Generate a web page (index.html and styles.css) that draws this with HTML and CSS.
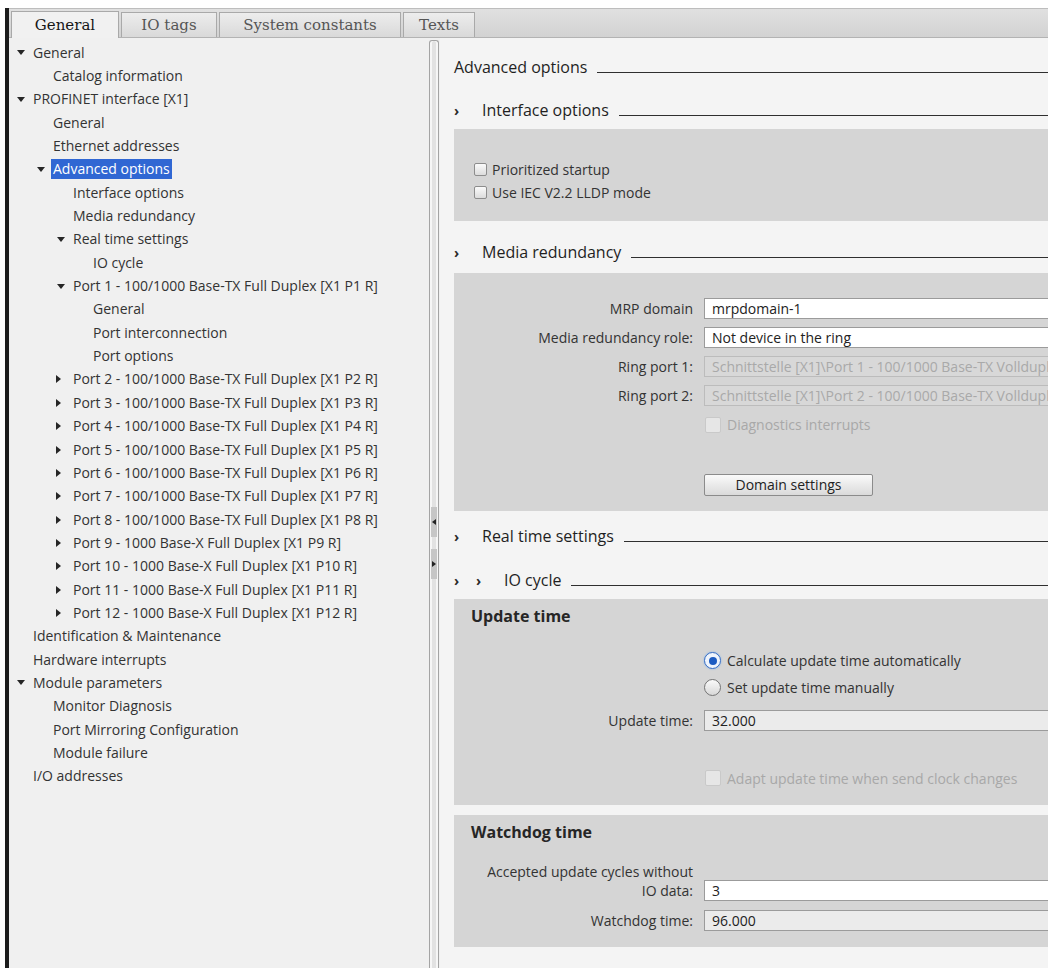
FILE: index.html
```html
<!DOCTYPE html>
<html lang="en">
<head>
    <meta charset="UTF-8">
    <title>PROFINET interface - Properties</title>
    <link rel="stylesheet" href="styles.css">
</head>
<body>
    <div class="window">
        <div class="tabs">
            <div class="tab active" style="width: 108px">General</div>
            <div class="tab" style="width: 96px">IO tags</div>
            <div class="tab" style="width: 182px">System constants</div>
            <div class="tab" style="width: 72px">Texts</div>
        </div>

        <div class="main">
            <div class="tree">
                <ul>
                    <li><div class="row"><i class="tw down"></i><span class="txt">General</span></div>
                        <ul>
                            <li><div class="row"><i class="tw"></i><span class="txt">Catalog information</span></div></li>
                        </ul>
                    </li>
                    <li><div class="row"><i class="tw down"></i><span class="txt">PROFINET interface [X1]</span></div>
                        <ul>
                            <li><div class="row"><i class="tw"></i><span class="txt">General</span></div></li>
                            <li><div class="row"><i class="tw"></i><span class="txt">Ethernet addresses</span></div></li>
                            <li><div class="row sel"><i class="tw down"></i><span class="txt">Advanced options</span></div>
                                <ul>
                                    <li><div class="row"><i class="tw"></i><span class="txt">Interface options</span></div></li>
                                    <li><div class="row"><i class="tw"></i><span class="txt">Media redundancy</span></div></li>
                                    <li><div class="row"><i class="tw down"></i><span class="txt">Real time settings</span></div>
                                        <ul>
                                            <li><div class="row"><i class="tw"></i><span class="txt">IO cycle</span></div></li>
                                        </ul>
                                    </li>
                                    <li><div class="row"><i class="tw down"></i><span class="txt">Port 1 - 100/1000 Base-TX Full Duplex [X1 P1 R]</span></div>
                                        <ul>
                                            <li><div class="row"><i class="tw"></i><span class="txt">General</span></div></li>
                                            <li><div class="row"><i class="tw"></i><span class="txt">Port interconnection</span></div></li>
                                            <li><div class="row"><i class="tw"></i><span class="txt">Port options</span></div></li>
                                        </ul>
                                    </li>
                                    <li><div class="row"><i class="tw right"></i><span class="txt">Port 2 - 100/1000 Base-TX Full Duplex [X1 P2 R]</span></div></li>
                                    <li><div class="row"><i class="tw right"></i><span class="txt">Port 3 - 100/1000 Base-TX Full Duplex [X1 P3 R]</span></div></li>
                                    <li><div class="row"><i class="tw right"></i><span class="txt">Port 4 - 100/1000 Base-TX Full Duplex [X1 P4 R]</span></div></li>
                                    <li><div class="row"><i class="tw right"></i><span class="txt">Port 5 - 100/1000 Base-TX Full Duplex [X1 P5 R]</span></div></li>
                                    <li><div class="row"><i class="tw right"></i><span class="txt">Port 6 - 100/1000 Base-TX Full Duplex [X1 P6 R]</span></div></li>
                                    <li><div class="row"><i class="tw right"></i><span class="txt">Port 7 - 100/1000 Base-TX Full Duplex [X1 P7 R]</span></div></li>
                                    <li><div class="row"><i class="tw right"></i><span class="txt">Port 8 - 100/1000 Base-TX Full Duplex [X1 P8 R]</span></div></li>
                                    <li><div class="row"><i class="tw right"></i><span class="txt">Port 9 - 1000 Base-X Full Duplex [X1 P9 R]</span></div></li>
                                    <li><div class="row"><i class="tw right"></i><span class="txt">Port 10 - 1000 Base-X Full Duplex [X1 P10 R]</span></div></li>
                                    <li><div class="row"><i class="tw right"></i><span class="txt">Port 11 - 1000 Base-X Full Duplex [X1 P11 R]</span></div></li>
                                    <li><div class="row"><i class="tw right"></i><span class="txt">Port 12 - 1000 Base-X Full Duplex [X1 P12 R]</span></div></li>
                                </ul>
                            </li>
                        </ul>
                    </li>
                    <li><div class="row"><i class="tw"></i><span class="txt">Identification &amp; Maintenance</span></div></li>
                    <li><div class="row"><i class="tw"></i><span class="txt">Hardware interrupts</span></div></li>
                    <li><div class="row"><i class="tw down"></i><span class="txt">Module parameters</span></div>
                        <ul>
                            <li><div class="row"><i class="tw"></i><span class="txt">Monitor Diagnosis</span></div></li>
                            <li><div class="row"><i class="tw"></i><span class="txt">Port Mirroring Configuration</span></div></li>
                            <li><div class="row"><i class="tw"></i><span class="txt">Module failure</span></div></li>
                        </ul>
                    </li>
                    <li><div class="row"><i class="tw"></i><span class="txt">I/O addresses</span></div></li>
                </ul>
            </div>

            <div class="splitter">
                <div class="bar">
                    <div class="grip"><i class="arrow-left"></i></div>
                    <div class="grip"><i class="arrow-right"></i></div>
                </div>
            </div>

            <div class="content">
                <div class="title first"><span class="title-text">Advanced options</span><i class="rule"></i></div>

                <div class="title t-iface"><span class="chev">›</span><span class="title-text">Interface options</span><i class="rule"></i></div>
                <div class="box box-iface">
                    <label class="check"><i class="cb"></i>Prioritized startup</label>
                    <label class="check"><i class="cb"></i>Use IEC V2.2 LLDP mode</label>
                </div>

                <div class="title t-media"><span class="chev">›</span><span class="title-text">Media redundancy</span><i class="rule"></i></div>
                <div class="box box-media">
                    <div class="form">
                        <span class="lbl">MRP domain</span>
                        <div class="field">mrpdomain-1</div>
                        <span class="lbl">Media redundancy role:</span>
                        <div class="field">Not device in the ring</div>
                        <span class="lbl">Ring port 1:</span>
                        <div class="field disabled">Schnittstelle [X1]\Port 1 - 100/1000 Base-TX Vollduplex [X1 P1 R]</div>
                        <span class="lbl">Ring port 2:</span>
                        <div class="field disabled">Schnittstelle [X1]\Port 2 - 100/1000 Base-TX Vollduplex [X1 P2 R]</div>
                        <span></span>
                        <label class="check off diag"><i class="cb"></i>Diagnostics interrupts</label>
                        <span></span>
                        <div class="btn">Domain settings</div>
                    </div>
                </div>

                <div class="title t-rt"><span class="chev">›</span><span class="title-text">Real time settings</span><i class="rule"></i></div>

                <div class="title t-io"><span class="chev">›</span><span class="chev">›</span><span class="title-text">IO cycle</span><i class="rule"></i></div>
                <div class="box box-update">
                    <div class="box-head">Update time</div>
                    <div class="form">
                        <span></span>
                        <label class="radio r-first"><i class="rb on"></i>Calculate update time automatically</label>
                        <span></span>
                        <label class="radio"><i class="rb"></i>Set update time manually</label>
                        <span class="lbl f-time">Update time:</span>
                        <div class="field ro f-time">32.000</div>
                        <span></span>
                        <label class="check off adapt"><i class="cb"></i>Adapt update time when send clock changes</label>
                    </div>
                </div>

                <div class="box box-watchdog">
                    <div class="box-head">Watchdog time</div>
                    <div class="form">
                        <span class="lbl two">Accepted update cycles without<br>IO data:</span>
                        <div class="field f-cycles">3</div>
                        <span class="lbl">Watchdog time:</span>
                        <div class="field ro">96.000</div>
                    </div>
                </div>
            </div>
        </div>
    </div>
</body>
</html>
```

FILE: styles.css
```css
* {
    box-sizing: border-box;
}

body {
    margin: 0;
    width: 1048px;
    height: 968px;
    overflow: hidden;
    background: #fff;
    font-family: "Open Sans", "DejaVu Sans", sans-serif;
    font-size: 14px;
    color: #333;
}

.window {
    margin: 8px 0 0 5px;
    height: 960px;
    border-left: 4px solid #1c1c1c;
    display: flex;
    flex-direction: column;
}

/* tab strip */
.tabs {
    height: 30px;
    flex: none;
    display: flex;
    align-items: flex-end;
    gap: 2px;
    padding-left: 2px;
    background: linear-gradient(#e0e0e0, #d2d2d2);
    border-top: 1px solid #bdbdbd;
    border-bottom: 1px solid #b3b3b3;
}

.tab {
    height: 25px;
    display: flex;
    align-items: center;
    justify-content: center;
    border: 1px solid #a9a9a9;
    border-bottom: none;
    background: linear-gradient(#ededed, #d9d9d9);
    font-family: "DejaVu Serif", "Liberation Serif", serif;
    font-size: 15px;
    color: #555;
}

.tab.active {
    height: 27px;
    margin-bottom: -1px;
    background: #f1f1f1;
    color: #161616;
}

.main {
    flex: 1;
    display: flex;
    min-height: 0;
}

/* navigation tree */
.tree {
    width: 419px;
    flex: none;
    background: #f0f0f0;
    padding: 3px 0 0 4px;
}

.tree ul {
    list-style: none;
    margin: 0;
    padding: 0;
}

.tree ul ul {
    padding-left: 20px;
}

.row {
    height: 23.35px;
    display: flex;
    align-items: center;
    white-space: nowrap;
}

.tw {
    flex: 0 0 20px;
    height: 10px;
    display: flex;
    align-items: center;
}

.tw.down::before {
    content: "";
    margin-left: 4px;
    border-left: 4px solid transparent;
    border-right: 4px solid transparent;
    border-top: 5px solid #262626;
}

.tw.right::before {
    content: "";
    margin-left: 3px;
    border-top: 4px solid transparent;
    border-bottom: 4px solid transparent;
    border-left: 5px solid #262626;
}

.txt {
    margin-left: -2px;
    padding: 0 2px;
    line-height: 20px;
    color: #333;
}

.sel .txt {
    background: #3067d3;
    color: #fff;
}

/* splitter between tree and editor */
.splitter {
    width: 12px;
    flex: none;
    display: flex;
    justify-content: center;
    padding-top: 2px;
    background: #f0f0f0;
}

.bar {
    width: 10px;
    border: 1px solid #a4a4a4;
    border-bottom: none;
    border-radius: 3px 3px 0 0;
    background: #e2e2e2;
    box-shadow: inset 2px 0 #f6f6f6, inset -2px 0 #f6f6f6;
    display: flex;
    flex-direction: column;
    align-items: center;
}

.grip {
    width: 6px;
    height: 30px;
    margin-top: 12px;
    background: #c6c6c6;
    display: flex;
    align-items: center;
    justify-content: center;
}

.grip:first-child {
    margin-top: 466px;
}

.arrow-left {
    border-top: 3px solid transparent;
    border-bottom: 3px solid transparent;
    border-right: 4px solid #222;
}

.arrow-right {
    border-top: 3px solid transparent;
    border-bottom: 3px solid transparent;
    border-left: 4px solid #222;
}

/* editor area */
.content {
    flex: 1;
    min-width: 0;
    overflow: hidden;
    background: #f4f4f4;
    padding-left: 14px;
}

.title {
    display: flex;
    align-items: baseline;
    height: 22px;
    font-size: 16px;
    line-height: 22px;
    color: #1f1f1f;
    white-space: nowrap;
}

.title.first { margin-top: 18px; }
.t-iface { margin-top: 21px; }
.t-media { margin-top: 20px; }
.t-rt { margin-top: 14px; }
.t-io { margin-top: 22px; }

.chev {
    flex: 0 0 22px;
    font-weight: 700;
    font-size: 14px;
    color: #2a2a2a;
}

.chev + .title-text {
    margin-left: 6px;
}

.rule {
    flex: 1;
    margin-left: 10px;
    border-bottom: 1px solid #2f2f2f;
}

.box {
    background: #d5d5d5;
    margin-top: 8px;
}

.box-iface {
    padding: 29px 0 17px 20px;
}

.box-iface .check {
    height: 23px;
}

.box-media {
    margin-top: 10px;
    padding: 25px 0 15px;
}

.box-update {
    padding: 6px 0 14px;
}

.box-watchdog {
    margin-top: 10px;
    padding: 6px 0 16px;
}

.box-head {
    padding-left: 17px;
    height: 22px;
    line-height: 22px;
    font-size: 16px;
    font-weight: 700;
    color: #262626;
}

.form {
    display: grid;
    grid-template-columns: 239px 1fr;
    column-gap: 11px;
    row-gap: 8px;
    align-items: center;
}

.lbl {
    text-align: right;
    color: #333;
    white-space: nowrap;
}

.lbl.two {
    line-height: 19px;
    align-self: end;
    margin-bottom: 1px;
}

.field {
    height: 21px;
    margin-right: -4px;
    padding-left: 7px;
    line-height: 19px;
    border: 1px solid #9b9b9b;
    background: #fff;
    color: #222;
    white-space: nowrap;
    overflow: hidden;
}

.field.ro {
    background: #ebebeb;
}

.field.disabled {
    background: #d8d8d8;
    border-color: #bcbcbc;
    color: #a9a9a9;
}

.box-watchdog .form {
    margin-top: 19px;
    row-gap: 9px;
}

.f-cycles {
    align-self: end;
}

/* check boxes and radio buttons */
.check,
.radio {
    display: flex;
    align-items: center;
    height: 26px;
    color: #333;
    white-space: nowrap;
}

.cb {
    width: 13px;
    height: 13px;
    margin-right: 5px;
    border: 1px solid #8d8d8d;
    border-radius: 2px;
    background: linear-gradient(#fbfbfb, #dcdcdc);
}

.check.off {
    color: #a8a8a8;
}

.check.off .cb {
    width: 16px;
    height: 16px;
    margin-left: 1px;
    margin-right: 6px;
    border-color: #c9c9c9;
    background: #e6e6e6;
}

.diag {
    height: 21px;
}

.btn {
    width: 169px;
    height: 22px;
    margin-top: 31px;
    border: 1px solid #8b8b8b;
    border-radius: 2px;
    background: linear-gradient(#fafafa, #dadada);
    text-align: center;
    line-height: 20px;
    color: #222;
}

.box-update .form {
    row-gap: 0;
}

.radio {
    height: 27px;
}

.r-first {
    margin-top: 20px;
}

.rb {
    width: 17px;
    height: 17px;
    margin-right: 6px;
    border: 1px solid #747474;
    border-radius: 50%;
    background: linear-gradient(#fafafa, #d8d8d8);
    display: flex;
    align-items: center;
    justify-content: center;
}

.rb.on {
    border-color: #3a6ec2;
    background: #eef4fc;
    box-shadow: 0 0 2px #7fb0ea;
}

.rb.on::after {
    content: "";
    width: 8px;
    height: 8px;
    border-radius: 50%;
    background: #1d5cc2;
}

.f-time {
    margin-top: 9px;
}

.adapt {
    margin-top: 34px;
}
```
